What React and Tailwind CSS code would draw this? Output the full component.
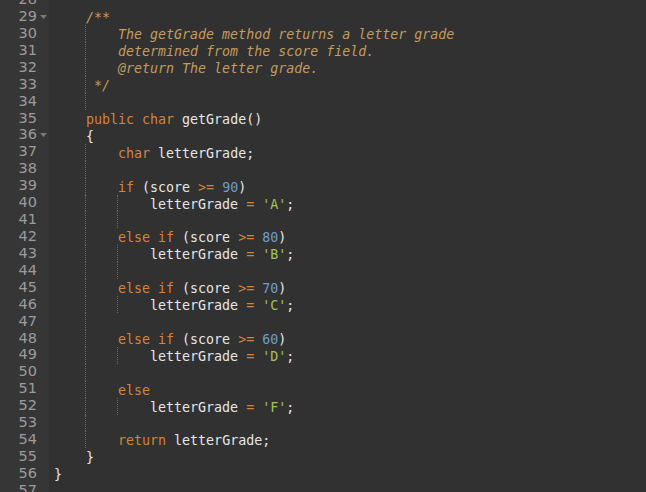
const C = {
  kw: "text-[#d4843a]",
  cm: "text-[#c49c5c] italic",
  id: "text-[#e6e6e6]",
  num: "text-[#6f9ecf]",
  str: "text-[#a2c35e]",
}

// each line: [number, tokens, guides, folded]
const lines = [
  [28, [], []],
  [29, [["cm", "    /**"]], [], true],
  [30, [["cm", "        The getGrade method returns a letter grade"]], [1]],
  [31, [["cm", "        determined from the score field."]], [1]],
  [32, [["cm", "        @return The letter grade."]], [1]],
  [33, [["cm", "     */"]], [1]],
  [34, [], [1]],
  [35, [["kw", "    public char "], ["id", "getGrade()"]], []],
  [36, [["id", "    {"]], [], true],
  [37, [["kw", "        char "], ["id", "letterGrade;"]], [1]],
  [38, [], [1]],
  [39, [["kw", "        if "], ["id", "(score "], ["kw", ">= "], ["num", "90"], ["id", ")"]], [1]],
  [40, [["id", "            letterGrade "], ["kw", "= "], ["str", "'A'"], ["id", ";"]], [1, 2]],
  [41, [], [1, 2]],
  [42, [["kw", "        else if "], ["id", "(score "], ["kw", ">= "], ["num", "80"], ["id", ")"]], [1]],
  [43, [["id", "            letterGrade "], ["kw", "= "], ["str", "'B'"], ["id", ";"]], [1, 2]],
  [44, [], [1, 2]],
  [45, [["kw", "        else if "], ["id", "(score "], ["kw", ">= "], ["num", "70"], ["id", ")"]], [1]],
  [46, [["id", "            letterGrade "], ["kw", "= "], ["str", "'C'"], ["id", ";"]], [1, 2]],
  [47, [], [1]],
  [48, [["kw", "        else if "], ["id", "(score "], ["kw", ">= "], ["num", "60"], ["id", ")"]], [1]],
  [49, [["id", "            letterGrade "], ["kw", "= "], ["str", "'D'"], ["id", ";"]], [1, 2]],
  [50, [], [1]],
  [51, [["kw", "        else"]], [1]],
  [52, [["id", "            letterGrade "], ["kw", "= "], ["str", "'F'"], ["id", ";"]], [1, 2]],
  [53, [], [1]],
  [54, [["kw", "        return "], ["id", "letterGrade;"]], [1]],
  [55, [["id", "    }"]], []],
  [56, [["id", "}"]], []],
  [57, [], []],
]

function Fold() {
  return (
    <svg width="7" height="4" viewBox="0 0 7 4" className="ml-[3px]">
      <path d="M0 0 H7 L3.5 4 Z" fill="#7a7a7a" />
    </svg>
  )
}

function Line({ n, tokens, guides, folded }) {
  return (
    <div className="flex h-[16.93px] items-center">
      <div className="flex h-full w-[49px] shrink-0 items-center bg-[#363636]">
        <span className="w-[37px] text-right text-[14.5px] text-[#9c9c9c]" style={{ fontFamily: "'DejaVu Sans', sans-serif" }}>
          {n}
        </span>
        {folded && <Fold />}
      </div>
      <div className="relative h-full flex-1 pl-[5px]">
        {guides.includes(1) && (
          <span className="absolute top-0 bottom-0 left-[36px] border-l border-dotted border-[#6a6a6a]" />
        )}
        {guides.includes(2) && (
          <span className="absolute top-0 bottom-0 left-[68px] border-l border-dotted border-[#6a6a6a]" />
        )}
        <span className="whitespace-pre leading-[16.93px]">
          {tokens.map(([t, s], i) => (
            <span key={i} className={C[t]}>
              {s}
            </span>
          ))}
        </span>
      </div>
    </div>
  )
}

export default function App() {
  return (
    <div
      className="h-[492px] w-[646px] overflow-hidden bg-[#313131] text-[13.3px]"
      style={{ fontFamily: "'DejaVu Sans Mono', monospace" }}
    >
      <div className="-mt-[8.5px]">
        {lines.map(([n, tokens, guides, folded]) => (
          <Line key={n} n={n} tokens={tokens} guides={guides} folded={folded} />
        ))}
      </div>
    </div>
  )
}
